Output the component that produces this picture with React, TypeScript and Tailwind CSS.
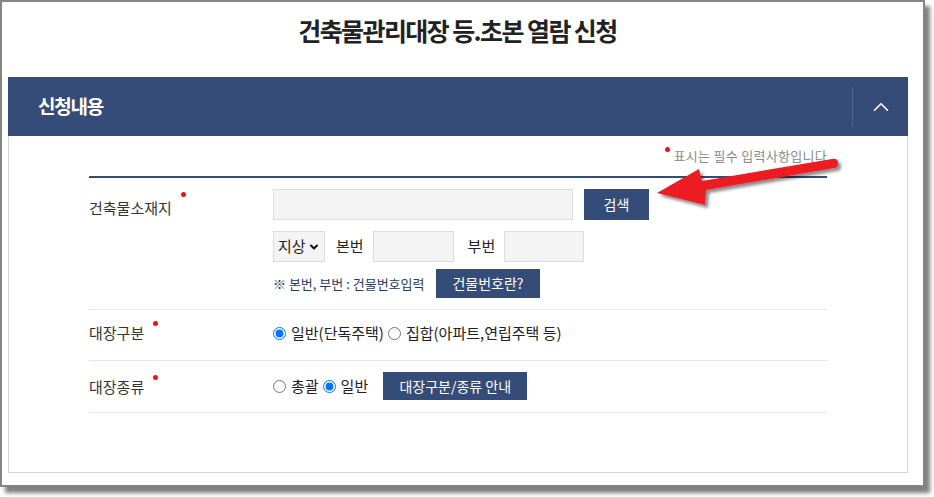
import { ChevronDown, ChevronUp } from "lucide-react";

const NAVY = "bg-[#354c79]";

function RequiredDot({ className = "" }: { className?: string }) {
  return (
    <span
      className={`inline-block h-[5px] w-[5px] shrink-0 rounded-full bg-[#e8141c] ${className}`}
    />
  );
}

function Label({ text, dotTop }: { text: string; dotTop: string }) {
  return (
    <div className="flex w-[184px] shrink-0 items-start">
      <span className="text-[15px] leading-[20px] text-[#333]">{text}</span>
      <RequiredDot className={`ml-[9px] ${dotTop}`} />
    </div>
  );
}

function NavyButton({ children, className = "" }: { children: React.ReactNode; className?: string }) {
  return (
    <button
      type="button"
      className={`${NAVY} flex items-center justify-center text-[14px] text-white ${className}`}
    >
      {children}
    </button>
  );
}

function Radio({ name, label, checked }: { name: string; label: string; checked?: boolean }) {
  return (
    <label className="flex items-center gap-[5px]">
      <input
        type="radio"
        name={name}
        defaultChecked={checked}
        className="m-0 h-[13px] w-[13px] accent-[#0075ff]"
      />
      <span className="text-[15px] leading-[20px] text-[#222]">{label}</span>
    </label>
  );
}

function Arrow() {
  return (
    <svg
      className="pointer-events-none absolute left-0 top-0"
      width="934"
      height="497"
      viewBox="0 0 934 497"
    >
      <defs>
        <filter id="arrowShadow" x="-20%" y="-50%" width="140%" height="200%">
          <feDropShadow dx="3" dy="3" stdDeviation="1.6" floodColor="#000" floodOpacity="0.45" />
        </filter>
      </defs>
      <path
        d="M657 193 L699 169 L702 181 L832 159 Q838 158 838 163 Q838 168 834 168 L706 190 L705 205 Z"
        fill="#ed1c24"
        filter="url(#arrowShadow)"
      />
    </svg>
  );
}

export default function App() {
  return (
    <div
      className="relative h-[497px] w-[934px] overflow-hidden bg-white"
      style={{ fontFamily: '"Noto Sans CJK KR", "Noto Sans", sans-serif' }}
    >
      <div className="flex h-[487px] w-[925px] flex-col border-2 border-[#848484] bg-white shadow-[5px_6px_4px_rgba(0,0,0,0.5)]">
        <h1 className="h-[75px] pr-[10px] pt-[12px] text-center text-[25px] font-bold leading-[32px] tracking-[-1.6px] text-[#222]">
          건축물관리대장 등.초본 열람 신청
        </h1>

        <section className="ml-[6px] w-[900px]">
          <div className={`${NAVY} flex h-[59px] items-center justify-between`}>
            <h2 className="pl-[30px] text-[19px] font-bold tracking-[-1.2px] text-white">신청내용</h2>
            <div className="flex h-[40px] w-[56px] items-center justify-center border-l border-[#4f6590]">
              <ChevronUp size={26} strokeWidth={1.5} className="text-white" />
            </div>
          </div>

          <div className="h-[337px] border-x border-b border-[#d4d4d4] px-[80px]">
            <div className="flex h-[40px] items-center justify-end">
              <RequiredDot className="mr-[3px] -mt-[14px]" />
              <span className="text-[13px] leading-[16px] tracking-[0.3px] text-[#8a8a8a]">표시는 필수 입력사항입니다</span>
            </div>

            <div className="flex border-t-2 border-b border-t-[#354c79] border-b-[#e8e8e8] pb-[11px] pt-[11px]">
              <div className="pt-[9px]">
                <Label text="건축물소재지" dotTop="-mt-[6px]" />
              </div>
              <div className="flex flex-col">
                <div className="flex gap-[11px]">
                  <input className="h-[31px] w-[300px] border border-[#dcdcdc] bg-[#f4f4f4]" />
                  <NavyButton className="h-[31px] w-[65px]">검색</NavyButton>
                </div>
                <div className="mt-[11px] flex items-center">
                  <div className="flex h-[31px] w-[52px] items-center border border-[#dcdcdc] bg-[#f4f4f4] pl-[4px] text-[15px] text-[#222]">
                    지상
                    <ChevronDown size={12} strokeWidth={4} className="ml-[2px] text-[#111]" />
                  </div>
                  <span className="ml-[11px] text-[15px] text-[#222]">본번</span>
                  <input className="ml-[9px] h-[31px] w-[81px] border border-[#dcdcdc] bg-[#f4f4f4]" />
                  <span className="ml-[14px] text-[15px] text-[#222]">부번</span>
                  <input className="ml-[9px] h-[31px] w-[80px] border border-[#dcdcdc] bg-[#f4f4f4]" />
                </div>
                <div className="mt-[7px] flex items-center">
                  <span className="w-[163px] whitespace-nowrap text-[13px] tracking-[0px] text-[#253a63]">
                    ※ 본번, 부번 : 건물번호입력
                  </span>
                  <NavyButton className="h-[29px] w-[104px]">건물번호란?</NavyButton>
                </div>
              </div>
            </div>

            <div className="flex items-start border-b border-[#e8e8e8] pb-[17px] pt-[13px]">
              <Label text="대장구분" dotTop="-mt-[2px]" />
              <div className="flex items-center gap-[4px]">
                <Radio name="kind" label="일반(단독주택)" checked />
                <Radio name="kind" label="집합(아파트,연립주택 등)" />
              </div>
            </div>

            <div className="flex items-center border-b border-[#e8e8e8] pb-[12px] pt-[11px]">
              <div className="pt-[1px]">
                <Label text="대장종류" dotTop="-mt-[2px]" />
              </div>
              <div className="flex items-center gap-[4px]">
                <Radio name="type" label="총괄" />
                <Radio name="type" label="일반" checked />
                <NavyButton className="ml-[11px] h-[28px] w-[144px]">대장구분/종류 안내</NavyButton>
              </div>
            </div>
          </div>
        </section>
      </div>
      <Arrow />
    </div>
  );
}
